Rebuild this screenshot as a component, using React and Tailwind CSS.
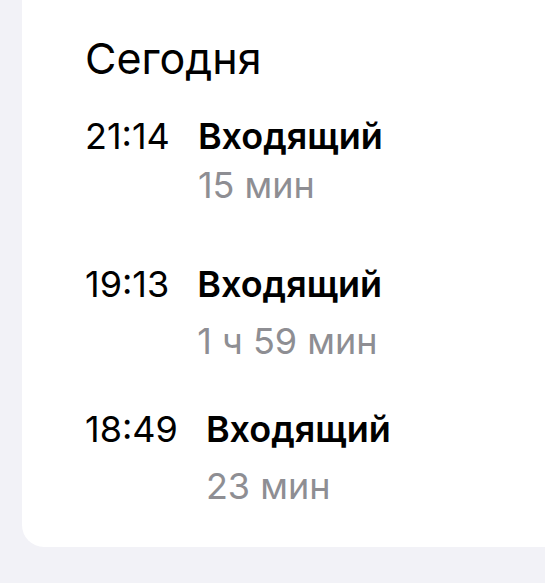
export default function App() {
  const rows = [
    { time: "21:14", label: "Входящий", dur: "15 мин", mt: "mt-[31px]", gap2: "mt-[7px]" },
    { time: "19:13", label: "Входящий", dur: "1 ч 59 мин", mt: "mt-[57px]", gap2: "mt-[15px]" },
    { time: "18:49", label: "Входящий", dur: "23 мин", mt: "mt-[46px]", gap2: "mt-[15px]" },
  ];
  return (
    <div
      className="w-full h-[583px] bg-[#f2f2f7] pl-[22px] overflow-hidden"
      style={{ fontFamily: "Inter, 'Noto Sans', sans-serif" }}
    >
      <div className="bg-white h-[547px] rounded-bl-[22px] pl-[63px] pt-[32px]">
        <div className="text-[43px] leading-[52px] text-black">Сегодня</div>
        {rows.map((r, i) => (
          <div key={i} className={`${r.mt} flex gap-[28px]`}>
            <div className="text-[36px] leading-[42px] text-black">{r.time}</div>
            <div className="flex flex-col">
              <div className="text-[36px] leading-[42px] font-semibold text-black">{r.label}</div>
              <div className={`${r.gap2} text-[36px] leading-[42px] text-[#8e8e93]`}>{r.dur}</div>
            </div>
          </div>
        ))}
      </div>
    </div>
  );
}
